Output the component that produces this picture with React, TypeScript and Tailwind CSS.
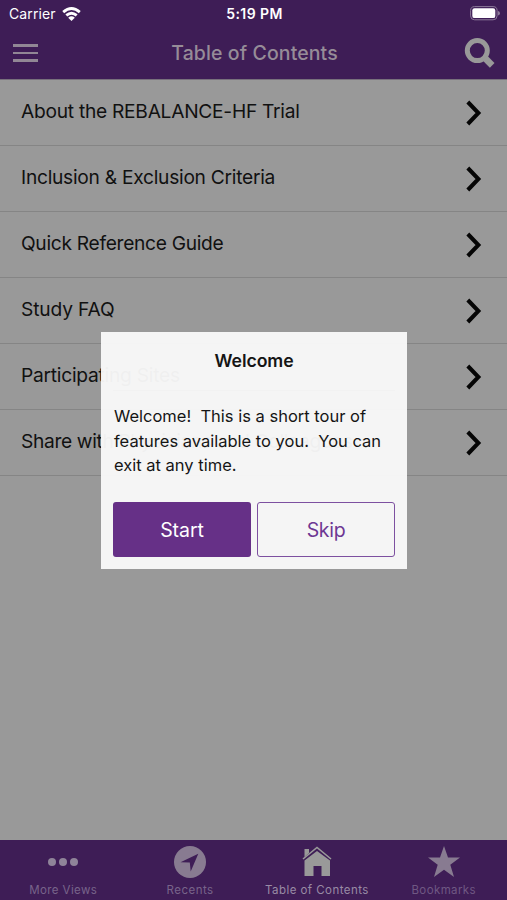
import type { ReactNode } from 'react';

const rows = [
  { label: 'About the REBALANCE-HF Trial', tracking: 'tracking-[-0.27px]' },
  { label: 'Inclusion & Exclusion Criteria', tracking: 'tracking-[-0.27px]' },
  { label: 'Quick Reference Guide', tracking: 'tracking-[-0.3px]' },
  { label: 'Study FAQ', tracking: 'tracking-[-0.15px]' },
  { label: 'Participating Sites', tracking: 'tracking-[-0.25px]' },
  { label: 'Share with Physicians and Colleagues', tracking: 'tracking-[-0.35px]' },
];

function Tab({ icon, label, color, spacing }: { icon: ReactNode; label: string; color: string; spacing: string }) {
  return (
    <div className="flex w-[126.5px] flex-col items-center">
      <div className="flex h-[43px] items-center justify-center">{icon}</div>
      <span className={`whitespace-nowrap text-[11.5px] leading-[14px] ${color} ${spacing}`}>{label}</span>
    </div>
  );
}

export default function App() {
  return (
    <div className="relative flex h-[900px] w-[507px] flex-col overflow-hidden bg-[#999999] font-['Inter',sans-serif]">
      <header className="flex h-[80px] shrink-0 flex-col border-b border-[#77707c] bg-[#3e1d56]">
        <div className="grid h-[27px] grid-cols-3 items-center pl-[9px] pr-[7px] text-white">
          <div className="flex items-center gap-[6px]">
            <span className="text-[14px] tracking-[0.1px]">Carrier</span>
            <svg width="19" height="14" viewBox="0 0 19 14" fill="none" stroke="white" strokeWidth="2.8">
              <path d="M1.2 5.1Q9.5 -2 17.8 5.1M4.3 8.4Q9.5 4 14.7 8.4" />
              <path d="M6.2 10.7Q9.5 8 12.8 10.7L9.5 13.9Z" fill="white" stroke="none" />
            </svg>
          </div>
          <span className="whitespace-nowrap text-center text-[14px] font-semibold tracking-[0.4px]">5:19 PM</span>
          <svg className="justify-self-end" width="30" height="15" viewBox="0 0 30 15">
            <rect x="0.6" y="0.6" width="26.5" height="13.2" rx="4" fill="none" stroke="#8d7a9a" />
            <rect x="2.3" y="2.3" width="23" height="9.8" rx="2.2" fill="white" />
            <path d="M28 5Q30 5.5 30 7.2Q30 9 28 9.5Z" fill="#8d7a9a" />
          </svg>
        </div>
        <div className="flex h-[52px] items-center justify-between pl-[13px] pr-[11px]">
          <div className="flex w-[32px] flex-col gap-[5px]">
            <div className="h-[2.6px] w-[25px] bg-[#918795]" />
            <div className="h-[2.6px] w-[25px] bg-[#918795]" />
            <div className="h-[2.6px] w-[25px] bg-[#918795]" />
          </div>
          <h1 className="whitespace-nowrap pt-px text-[19.5px] font-medium tracking-[0.1px] text-[#968c98]">Table of Contents</h1>
          <svg width="32" height="31" viewBox="0 0 32 31" fill="none" stroke="#999">
            <circle cx="13.3" cy="12.6" r="10" strokeWidth="5" />
            <path d="M20 19.2L28.2 27.3" strokeWidth="6.6" />
          </svg>
        </div>
      </header>

      <main className="flex-1">
        {rows.map((r) => (
          <div key={r.label} className="flex h-[66px] items-center justify-between border-b border-[#858585] pl-[21px] pr-[25px]">
            <span className={`whitespace-nowrap pb-[3px] text-[19.2px] leading-[24px] text-[#111111] ${r.tracking}`}>{r.label}</span>
            <svg width="16" height="26" viewBox="0 0 16 26" fill="none" stroke="#050505" strokeWidth="4">
              <path d="M1.8 2L12.4 13L1.8 24" strokeLinejoin="miter" />
            </svg>
          </div>
        ))}
      </main>

      <nav className="flex h-[60px] shrink-0 justify-between bg-[#3e1d56]">
        <Tab label="More Views" color="text-[#78648a]" spacing="tracking-[0.4px]" icon={
          <svg width="30" height="8" viewBox="0 0 30 8" fill="#8f8499"><circle cx="4" cy="4" r="4" /><circle cx="15" cy="4" r="4" /><circle cx="26" cy="4" r="4" /></svg>
        } />
        <Tab label="Recents" color="text-[#78648a]" spacing="tracking-[0.5px]" icon={
          <svg width="32" height="32" viewBox="0 0 32 32"><circle cx="16" cy="16" r="16" fill="#887b91" /><path d="M24.3 7.8L16.7 25.5L15.8 16.6L6.5 16.2Z" fill="#3e1d56" /></svg>
        } />
        <Tab label="Table of Contents" color="text-[#998ba5]" spacing="tracking-[0.45px]" icon={
          <svg width="30" height="31" viewBox="0 0 30 31" fill="#999"><path d="M2.5 3H7V7L2.5 11Z" /><path d="M1 13L15 1.5L29 13" fill="none" stroke="#999" strokeWidth="1.6" /><path d="M2.5 14.5L15 5L28 14.5V30H19.5V20H11.5V30H2.5Z" /></svg>
        } />
        <Tab label="Bookmarks" color="text-[#6f5883]" spacing="tracking-[0.4px]" icon={
          <svg width="32" height="31" viewBox="0 0 32 31" fill="#887b91"><path d="M16 0L20 11.5H32L22.3 18.8L26 31L16 23.7L6 31L9.7 18.8L0 11.5H12Z" /></svg>
        } />
      </nav>

      <section role="dialog" className="absolute left-[101px] top-[332px] flex h-[237px] w-[306px] flex-col bg-[#f9f9f9]/96 px-3 text-[#151515]">
        <h2 className="h-[59px] border-b border-[#f2f2f2] text-center text-[17.7px] font-semibold leading-[58px] tracking-[-0.1px]">Welcome</h2>
        <p className="mt-[13px] h-[98px] whitespace-pre pl-px text-[16.5px] leading-[24.5px]">{'Welcome!  This is a short tour of\nfeatures available to you.  You can\nexit at any time.'}</p>
        <div className="grid grid-cols-2 gap-[6px]">
          <button className="h-[55px] rounded-[3px] bg-[#663087] pt-[3px] text-[19.5px] tracking-[-0.05px] text-white">Start</button>
          <button className="h-[55px] rounded-[3px] border-[1.5px] border-[#7d50a0] pt-[3px] text-[19.5px] tracking-[-0.3px] text-[#6d3793]">Skip</button>
        </div>
      </section>
    </div>
  );
}
